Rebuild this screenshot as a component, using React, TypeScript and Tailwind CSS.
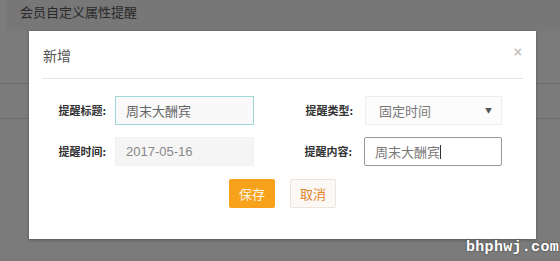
import React from "react";

export default function App() {
  const cjk = { fontFamily: '"Microsoft YaHei", "Noto Sans CJK SC", "Liberation Sans", sans-serif' };
  return (
    <div className="relative w-[560px] h-[261px] overflow-hidden bg-[#7b7b7b]" style={cjk}>
      {/* background page */}
      <div className="flex flex-col">
        <div className="ml-[7px] h-[31px] bg-[#777777] flex items-start pt-[2px] pl-[13px] text-[13px] text-[#2a2a2a]">
          会员自定义属性提醒
        </div>
        <div className="h-[53px] border-b border-[#6c6c6c]" />
        <div className="h-[35px] border-b border-[#6c6c6c]" />
      </div>

      {/* modal */}
      <div className="absolute left-[29px] top-[31px] w-[507px] h-[208px] bg-white flex flex-col px-[13px] shadow-[0_1px_3px_rgba(0,0,0,0.3)]">
        <div className="relative h-[48px] border-b border-[#e3e3e3] flex items-center pl-[1px] pt-[2px]">
          <span className="text-[14px] text-[#555]">新增</span>
          <span className="absolute right-[1px] top-[11px] text-[14px] font-bold text-[#c4c4c4]" style={{ fontFamily: '"Liberation Sans", sans-serif' }}>×</span>
        </div>

        <div className="grid grid-cols-[249px_232px] mt-[17px] gap-y-[12px]">
          <div className="flex items-center">
            <span className="w-[73px] text-right pr-[9px] text-[11px] font-bold text-[#333]">提醒标题:</span>
            <div className="w-[139px] h-[29px] border border-[#9fd8d4] bg-[#f9f9f9] flex items-center pl-[10px] text-[13px] text-[#666]">周末大酬宾</div>
          </div>
          <div className="flex items-center">
            <span className="w-[74px] text-right pr-[12px] text-[11px] font-bold text-[#333]">提醒类型:</span>
            <div className="w-[137px] h-[29px] border border-[#eeeeee] bg-[#fcfcfc] flex items-center justify-between pl-[13px] pr-[9px] text-[13px] text-[#777]">
              <span>固定时间</span>
              <span className="text-[7px] text-[#555]">▼</span>
            </div>
          </div>
          <div className="flex items-center">
            <span className="w-[73px] text-right pr-[9px] text-[11px] font-bold text-[#333]">提醒时间:</span>
            <div className="w-[139px] h-[29px] border border-[#f2f2f2] bg-[#f5f5f5] flex items-center pl-[10px] text-[13px] text-[#888]" style={{ fontFamily: '"Liberation Sans", sans-serif' }}>2017-05-16</div>
          </div>
          <div className="flex items-center">
            <span className="w-[73px] text-right pr-[12px] text-[11px] font-bold text-[#333]">提醒内容:</span>
            <div className="w-[138px] h-[29px] border border-[#9a9a9a] rounded-[2px] bg-white flex items-center pl-[10px] text-[13px] text-[#777]">
              周末大酬宾<span className="inline-block w-px h-[14px] bg-[#333]" />
            </div>
          </div>
        </div>

        <div className="flex justify-center gap-[15px] mt-[13px]">
          <button className="w-[46px] h-[29px] rounded-[2px] bg-[#f8a11a] text-[13px] text-[#fff4e4]">保存</button>
          <button className="w-[46px] h-[29px] rounded-[2px] bg-[#fbf8f5] border border-[#ece4dc] text-[13px] text-[#e2862e]">取消</button>
        </div>
      </div>

      {/* watermark */}
      <div className="absolute right-[1px] bottom-[2px] text-[15px] font-bold text-white tracking-[0.3px] [text-shadow:0_0_2px_#333]" style={{ fontFamily: '"Liberation Mono", monospace' }}>
        bhphwj.com
      </div>
    </div>
  );
}
